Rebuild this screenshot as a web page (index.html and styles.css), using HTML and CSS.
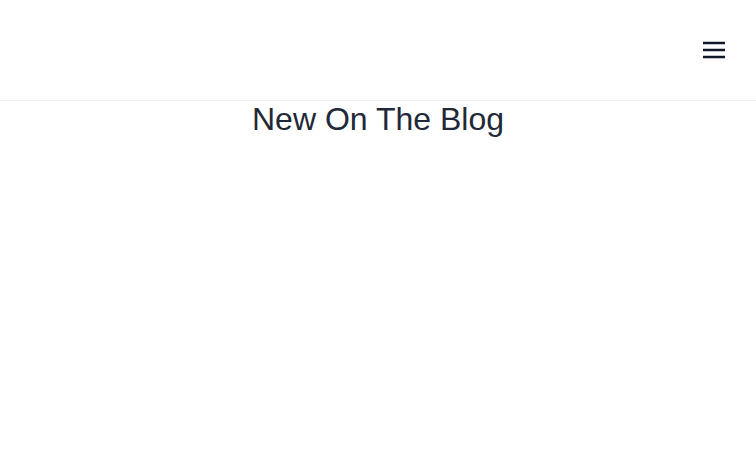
FILE: index.html
```html
<!DOCTYPE html>
<html lang="en">
<head>
  <meta charset="UTF-8">
  <meta name="viewport" content="width=device-width, initial-scale=1.0">
  <title>Blog</title>
  <link rel="stylesheet" href="styles.css">
</head>
<body>
  <header class="site-header">
    <div class="logo"></div>
    <button class="menu-button" aria-label="Open menu">
      <svg viewBox="0 0 24 24" width="32" height="32" fill="none" stroke="currentColor" stroke-width="1.75">
        <path d="M3.75 6.75h16.5M3.75 12h16.5m-16.5 5.25h16.5" />
      </svg>
    </button>
  </header>

  <main class="content">
    <h1 class="section-title">New On The Blog</h1>
    <div class="posts">
      <!-- posts load here -->
    </div>
  </main>
</body>
</html>
```

FILE: styles.css
```css
body {
  font-family: 'Liberation Sans', Arial, Helvetica, sans-serif;
  margin: 0;
  background-color: #ffffff;
  color: #1f2937;
}

.site-header {
  height: 100px;
  display: flex;
  justify-content: space-between;
  align-items: center;
  padding: 0 26px 0 24px;
  border-bottom: 1px solid #f0f1f3;
}

.menu-button {
  display: flex;
  padding: 0;
  border: none;
  background: none;
  color: #111827;
  cursor: pointer;
}

.section-title {
  margin: 0;
  text-align: center;
  font-size: 32px;
  line-height: 36px;
  font-weight: 400;
  color: #1f2937;
}
```
